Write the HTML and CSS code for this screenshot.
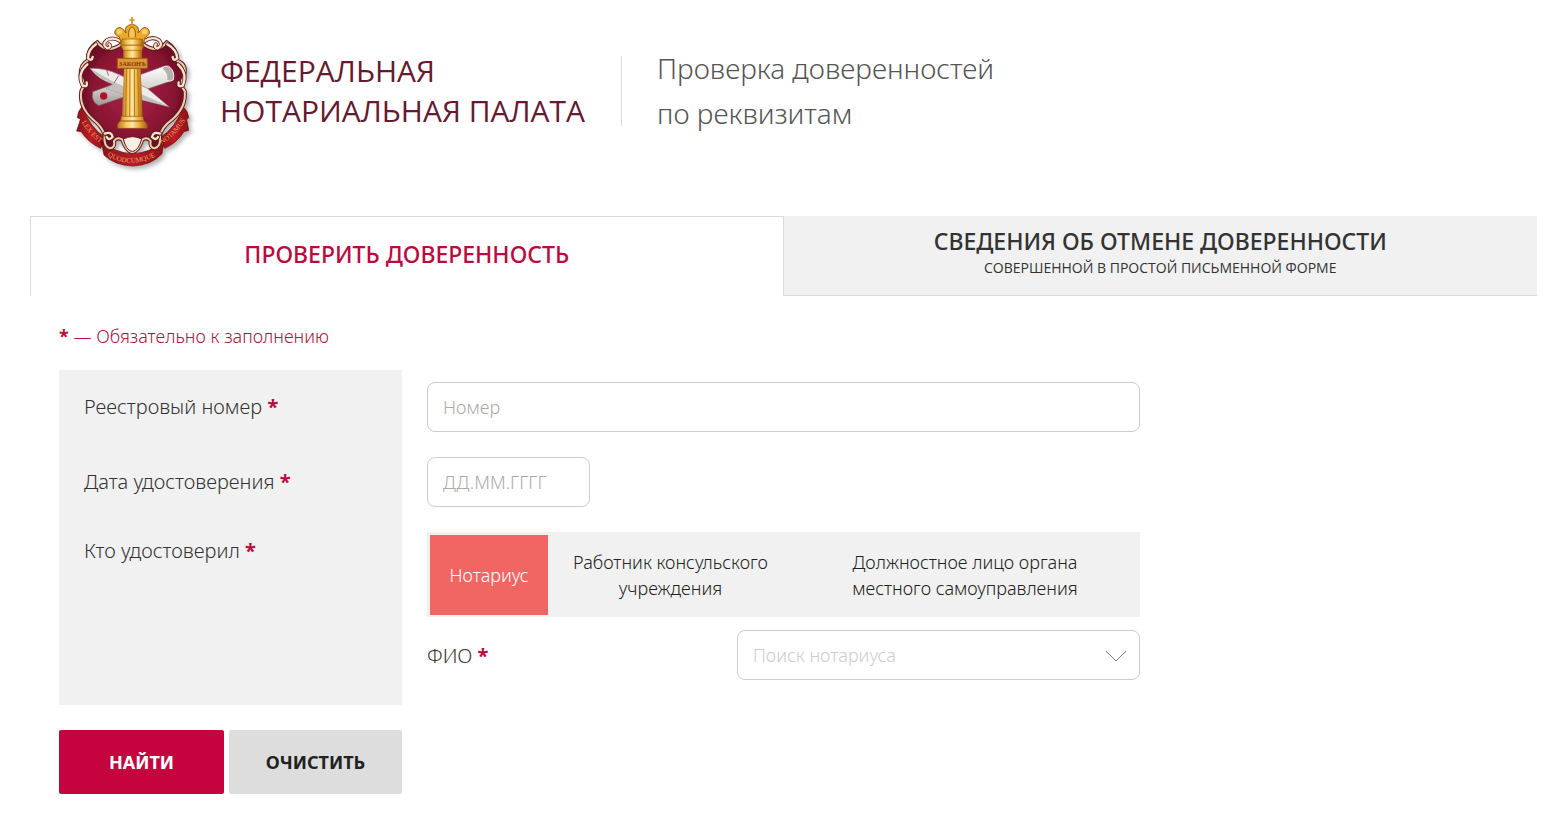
FILE: index.html
```
<!DOCTYPE html>
<html lang="ru">
<head>
    <meta charset="UTF-8">
    <meta name="viewport" content="width=device-width, initial-scale=1.0">
    <title>Проверка доверенностей по реквизитам</title>
    <link rel="stylesheet" href="styles.css">
</head>
<body>

<!-- Header -->
<header class="header">
    <svg class="emblem" viewBox="0 0 450 540" aria-hidden="true">
        <defs>
            <radialGradient id="shieldFill" cx="50%" cy="45%" r="60%">
                <stop offset="0" stop-color="#a8284a"/>
                <stop offset="0.6" stop-color="#8c1433"/>
                <stop offset="1" stop-color="#5e0c20"/>
            </radialGradient>
            <linearGradient id="gold" x1="0" x2="1">
                <stop offset="0" stop-color="#b8741c"/>
                <stop offset="0.3" stop-color="#f7c95c"/>
                <stop offset="0.5" stop-color="#ffe9a0"/>
                <stop offset="0.75" stop-color="#e8a636"/>
                <stop offset="1" stop-color="#a05c10"/>
            </linearGradient>
            <linearGradient id="paper" x1="0" y1="0" x2="0" y2="1">
                <stop offset="0" stop-color="#ffffff"/>
                <stop offset="0.5" stop-color="#d9d5d3"/>
                <stop offset="1" stop-color="#9d9695"/>
            </linearGradient>
            <linearGradient id="ribbon" x1="0" x2="1">
                <stop offset="0" stop-color="#8d1118"/>
                <stop offset="0.5" stop-color="#bc1c26"/>
                <stop offset="1" stop-color="#8d1118"/>
            </linearGradient>
            <filter id="shadow" x="-20%" y="-20%" width="140%" height="140%">
                <feDropShadow dx="8" dy="9" stdDeviation="6" flood-color="#000" flood-opacity="0.3"/>
            </filter>
            <path id="ribbonLeft" d="M65 352 Q88 394 134 422"/>
            <path id="ribbonMid" d="M142 452 Q217 500 312 440"/>
            <path id="ribbonRight" d="M306 418 Q354 390 388 326"/>
            <path id="frame" d="M112 112 Q140 148 184 118 L250 118 Q290 148 320 112 Q350 130 352 168 Q382 178 372 214 Q356 238 374 258 Q380 306 336 344 Q306 366 300 392 Q304 424 284 430 Q268 428 272 408 Q262 394 247 404 Q236 438 217 442 Q198 438 187 404 Q172 394 162 408 Q166 428 150 430 Q130 424 134 392 Q128 366 100 344 Q56 306 64 258 Q78 238 62 212 Q60 178 84 166 Q82 130 112 112Z"/>
            <g id="curls">
                <path d="M180 108 Q158 94 140 106 Q124 120 142 130 Q156 126 148 118"/>
                <path d="M254 108 Q278 92 298 106 Q310 122 292 130 Q280 126 288 118"/>
                <path d="M108 118 Q84 134 84 160 Q96 170 98 156"/>
                <path d="M322 118 Q350 134 352 160 Q340 170 338 156"/>
                <path d="M82 178 Q50 206 68 242 Q84 248 80 232"/>
                <path d="M354 178 Q384 206 368 242 Q352 248 356 232"/>
                <path d="M134 386 Q154 378 158 396 Q146 408 140 396"/>
                <path d="M300 386 Q280 378 276 396 Q288 408 294 396"/>
            </g>
        </defs>
        <g filter="url(#shadow)">
            <!-- Ribbon -->
            <path d="M66 306 Q54 316 52 338 L62 342 L50 378 L64 380 Q84 412 122 430 L136 398 Q92 370 66 306Z" fill="url(#ribbon)" stroke="#5d0b12" stroke-width="2"/>
            <path d="M370 306 Q384 318 386 338 L380 344 L386 376 L372 380 Q350 414 314 430 L300 398 Q346 370 370 306Z" fill="url(#ribbon)" stroke="#5d0b12" stroke-width="2"/>
            <path d="M124 408 L132 450 Q162 480 218 483 Q276 480 306 446 L312 408 Q270 444 218 446 Q164 444 124 408Z" fill="url(#ribbon)" stroke="#5d0b12" stroke-width="2"/>
            <!-- Shield -->
            <use href="#frame" fill="url(#shieldFill)" stroke="#5c1e1e" stroke-width="12"/>
            <use href="#frame" fill="none" stroke="#f1cbb0" stroke-width="6"/>
            <path d="M190 402 Q217 388 245 402 Q236 436 217 440 Q198 436 190 402Z" fill="#f7eee4" stroke="#6b1f1c" stroke-width="3"/>
        </g>
        <!-- Scrolls of the frame -->
        <g fill="none" stroke-linecap="round">
            <use href="#curls" stroke="#5c1e1e" stroke-width="12"/>
            <use href="#curls" stroke="#fbe3cd" stroke-width="7"/>
        </g>
        <!-- Rolled deed and pen -->
        <path d="M98 260 L310 184 Q346 190 340 226 L116 302 Q92 290 98 260Z" fill="url(#paper)" stroke="#6f5b5b" stroke-width="2"/>
        <path d="M306 190 Q314 180 326 184 Q346 198 340 224 Q328 232 320 226 Q324 204 306 190Z" fill="#b7b1ae" stroke="#efecea" stroke-width="3"/>
        <circle cx="131" cy="273" r="11" fill="#b3122f"/>
        <path d="M90 190 Q134 188 176 208 L262 250 L328 306 L244 284 L138 250 L160 238 Q112 222 90 190Z" fill="#eeeceb" stroke="#857a79" stroke-width="2"/>
        <path d="M94 192 L160 230 L250 270 L322 302 L244 284 L138 250 L160 238 Q112 222 94 192Z" fill="#c4bebc"/>
        <path d="M140 196 L146 212 M176 212 L162 234" stroke="#7b1a30" stroke-width="2"/>
        <!-- Column -->
        <path d="M192 186 H242 L248 340 H186Z" fill="url(#gold)"/>
        <path d="M200 190 L197 336 M210 190 L209 336 M223 190 L224 336 M233 190 L237 336" stroke="#b8781a" stroke-width="3"/>
        <path d="M184 334 H248 L252 348 Q264 354 262 370 H172 Q170 354 182 348Z" fill="url(#gold)" stroke="#8e5210" stroke-width="2"/>
        <path d="M184 348 H252" stroke="#8a4f10" stroke-width="3"/>
        <path d="M190 134 H246 V164 H190Z" fill="url(#gold)"/>
        <path d="M182 120 H252 L246 136 H190Z" fill="url(#gold)" stroke="#9a5a10" stroke-width="2"/>
        <path d="M172 160 H262 V190 H172Z" fill="#dd9538" stroke="#9a5a10" stroke-width="3"/>
        <text class="emblem-law" x="217" y="182" text-anchor="middle">ЗАКОНЪ</text>
        <!-- Crown -->
        <path d="M184 116 L178 96 Q158 88 167 74 Q180 60 192 76 L198 84 Q190 62 216 58 Q242 62 234 84 L242 76 Q252 60 266 74 Q274 88 256 96 L250 116Z" fill="#e9a92d" stroke="#9a5a10" stroke-width="3"/>
        <path d="M186 102 H248 L250 120 H182Z" fill="url(#gold)" stroke="#9a5a10" stroke-width="2"/>
        <path d="M206 96 Q204 70 216 66 Q228 70 226 96" fill="#f6c65a" stroke="#9a5a10" stroke-width="3"/>
        <circle cx="178" cy="80" r="8" fill="#f8cf68"/>
        <circle cx="254" cy="80" r="8" fill="#f8cf68"/>
        <path d="M216 36 V60 M208 45 H224" stroke="#d8921d" stroke-width="5"/>
        <g class="emblem-motto">
            <text><textPath href="#ribbonLeft">LEX EST</textPath></text>
            <text><textPath href="#ribbonMid">QUODCUMQUE</textPath></text>
            <text><textPath href="#ribbonRight">NOTAMUS</textPath></text>
        </g>
    </svg>
    <p class="org-name">Федеральная<br>нотариальная палата</p>
    <div class="divider"></div>
    <h1 class="page-title">Проверка доверенностей<br>по реквизитам</h1>
</header>

<main class="content">
    <!-- Tabs -->
    <nav class="tabs">
        <a class="tab tab-active" href="#check">Проверить доверенность</a>
        <a class="tab" href="#cancel">Сведения об отмене доверенности
            <small class="tab-note">совершенной в простой письменной форме</small>
        </a>
    </nav>

    <!-- Search form -->
    <form class="form" id="check">
        <p class="required-note"><span class="star">*</span> — Обязательно к заполнению</p>

        <div class="row">
            <div class="row-label"><label for="number">Реестровый номер <span class="star">*</span></label></div>
            <div class="row-field">
                <input class="input" type="text" id="number" placeholder="Номер">
            </div>
        </div>

        <div class="row">
            <div class="row-label"><label for="date">Дата удостоверения <span class="star">*</span></label></div>
            <div class="row-field">
                <input class="input input-date" type="text" id="date" placeholder="ДД.ММ.ГГГГ">
            </div>
        </div>

        <div class="row row-last">
            <div class="row-label row-label-top" id="whoLabel">Кто удостоверил <span class="star">*</span></div>
            <div class="row-field">
                <div class="switch" role="radiogroup" aria-labelledby="whoLabel">
                    <input class="switch-input" type="radio" name="who" id="notary" checked>
                    <label class="switch-item" for="notary">Нотариус</label>
                    <input class="switch-input" type="radio" name="who" id="consul">
                    <label class="switch-item" for="consul">Работник консульского<br>учреждения</label>
                    <input class="switch-input" type="radio" name="who" id="official">
                    <label class="switch-item" for="official">Должностное лицо органа<br>местного самоуправления</label>
                </div>
                <div class="name-row">
                    <label for="name">ФИО <span class="star">*</span></label>
                    <div class="select-wrap">
                        <select class="input select" id="name">
                            <option>Поиск нотариуса</option>
                        </select>
                        <svg class="select-arrow" viewBox="0 0 22 12" aria-hidden="true">
                            <path d="M1 1 L11 11 L21 1" fill="none" stroke="#777" stroke-width="1"/>
                        </svg>
                    </div>
                </div>
            </div>
        </div>

        <div class="buttons">
            <button class="btn btn-find" type="submit">Найти</button>
            <button class="btn btn-clear" type="reset">Очистить</button>
        </div>
    </form>
</main>

</body>
</html>
```
FILE: styles.css
```
* {
    box-sizing: border-box;
}

body {
    margin: 0;
    background: #fff;
    color: #333;
    font-family: "Noto Sans", "Open Sans", sans-serif;
    font-size: 18px;
}

/* Header */
.header {
    display: flex;
    align-items: flex-start;
    padding: 5px 30px 31px 60px;
}

.emblem {
    flex: none;
    width: 150px;
    height: 180px;
}

.emblem-law {
    font: bold 19px "Liberation Serif", serif;
    fill: #7c3a08;
}

.emblem-motto {
    font: 21px "Liberation Serif", serif;
    fill: #f0a060;
}

.org-name {
    margin: 46px 36px 0 10px;
    color: #651a31;
    font-family: "Open Sans", sans-serif;
    font-size: 30px;
    font-weight: 400;
    line-height: 40px;
    text-transform: uppercase;
}

.divider {
    width: 1px;
    height: 70px;
    margin-top: 51px;
    background: #ddd;
}

.page-title {
    margin: 41px 0 0 35px;
    color: #555;
    font-size: 28px;
    font-weight: 350;
    line-height: 45px;
}

/* Tabs */
.content {
    margin: 0 25px 0 30px;
}

.tabs {
    display: grid;
    grid-template-columns: 1fr 1fr;
}

.tab {
    display: flex;
    flex-direction: column;
    align-items: center;
    height: 80px;
    padding-top: 10px;
    border-bottom: 1px solid #dbdbdb;
    background: #f1f1f1;
    color: #333;
    font-size: 23px;
    font-weight: 500;
    line-height: 30px;
    text-decoration: none;
    text-transform: uppercase;
}

.tab-active {
    padding-top: 22px;
    border: 1px solid #dbdbdb;
    border-bottom: 0;
    background: #fff;
    color: #b90b3f;
}

.tab-note {
    font-family: "Open Sans", sans-serif;
    font-size: 14px;
    font-weight: 400;
    line-height: 24px;
}

/* Form */
.form {
    padding: 28px 29px 19px;
}

.required-note {
    margin: 0 0 22px;
    color: #a31740;
    font-weight: 300;
    line-height: 24px;
}

.star {
    color: #b90b3f;
    font-weight: 700;
}

.row {
    display: flex;
    gap: 25px;
}

.row-label {
    flex: none;
    width: 343px;
    padding: 22px 25px;
    background: #f1f1f1;
    font-size: 20px;
    font-weight: 350;
    line-height: 30px;
}

.row-label-top {
    padding-top: 16px;
}

.row-field {
    flex: 1;
    max-width: 713px;
    padding: 12px 0 13px;
}

.row-last .row-field {
    padding-bottom: 25px;
}

.input {
    display: block;
    width: 100%;
    height: 50px;
    padding: 0 15px;
    border: 1px solid #ccc;
    border-radius: 8px;
    background: #fff;
    color: #333;
    font: inherit;
    font-weight: 350;
}

.input::placeholder {
    color: #aaa;
    opacity: 1;
}

.input-date {
    width: 163px;
}

/* Who certified */
.switch {
    display: grid;
    grid-template-columns: 118px 245px 1fr;
    height: 85px;
    padding: 3px 3px 2px;
    background: #f1f1f1;
}

.switch-input {
    position: absolute;
    opacity: 0;
    pointer-events: none;
}

.switch-item {
    display: flex;
    align-items: center;
    justify-content: center;
    color: #222;
    font-weight: 350;
    line-height: 26px;
    text-align: center;
    cursor: pointer;
}

.switch-input:checked + .switch-item {
    background: #f16663;
    color: #fff;
}

.name-row {
    display: flex;
    align-items: center;
    justify-content: space-between;
    margin-top: 13px;
    font-size: 20px;
    font-weight: 350;
}

.select-wrap {
    position: relative;
    width: 403px;
}

.select {
    appearance: none;
    color: #ccc;
    font-size: 18px;
}

.select-arrow {
    position: absolute;
    top: 20px;
    right: 13px;
    width: 22px;
    height: 12px;
    pointer-events: none;
}

/* Buttons */
.buttons {
    display: flex;
    gap: 5px;
    margin-top: 25px;
}

.btn {
    width: 165px;
    height: 64px;
    border: 0;
    border-radius: 2px;
    font: inherit;
    font-weight: 700;
    text-transform: uppercase;
    cursor: pointer;
}

.btn-find {
    background: #c5033e;
    color: #fff;
}

.btn-clear {
    width: 173px;
    background: #ddd;
    color: #222;
}
```
